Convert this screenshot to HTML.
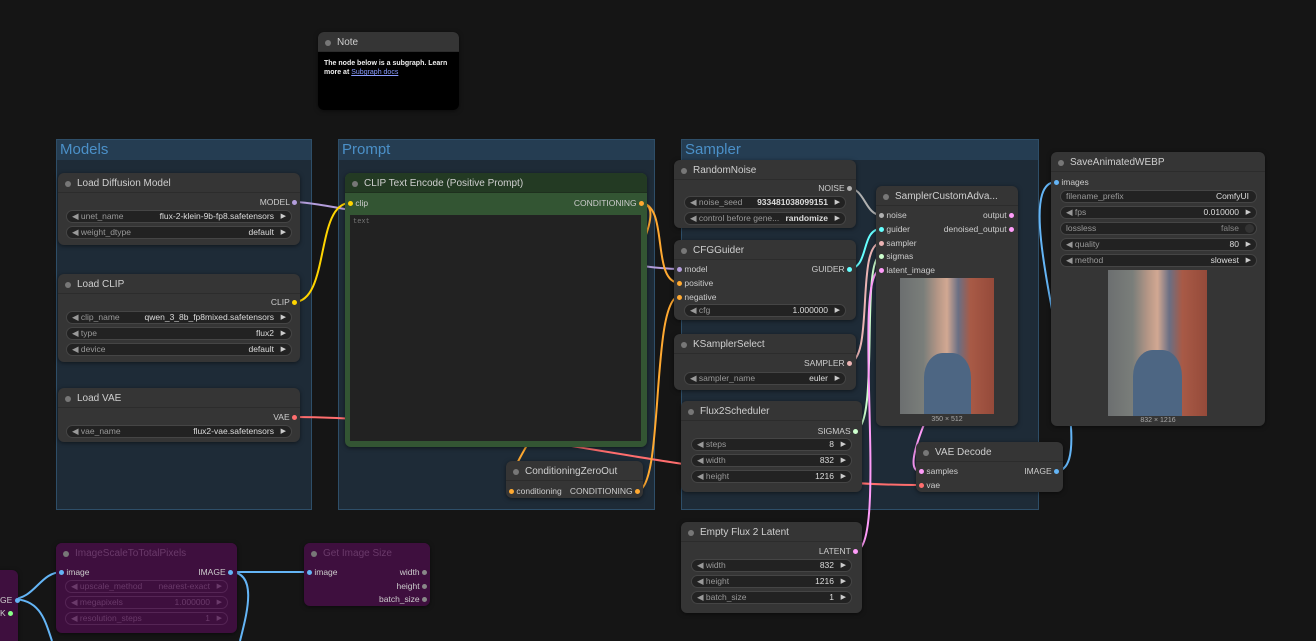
<!DOCTYPE html>
<html><head><meta charset="utf-8"><style>
*{box-sizing:border-box;margin:0;padding:0}
html,body{width:1316px;height:641px;overflow:hidden}
body{background:#151515;position:relative;font-family:"Liberation Sans",sans-serif;font-size:9px;color:#ccc}
.g{position:absolute;background:#1e2b37;border:1px solid #2e4e68}
.g .gt{height:20px;background:#253d52;color:#4b90c8;font-size:15px;line-height:20px;padding-left:3px}
.n{position:absolute;background:#353535;border-radius:6px;box-shadow:0 1px 4px rgba(0,0,0,.5)}
.t{position:absolute;left:0;right:0;top:0;height:20px;border-bottom:1px solid #2c2c2c;color:#cfcfcf;font-size:10px;line-height:22px;padding-left:19px;border-radius:6px 6px 0 0}
.t:before{content:"";position:absolute;left:7px;top:8px;width:6px;height:6px;border-radius:50%;background:#777}
.r{position:absolute;font-size:8.5px;color:#ccc;line-height:10px;white-space:nowrap}
.o{text-align:right}
.d{display:inline-block;width:5px;height:5px;border-radius:50%;vertical-align:0}
.w{position:absolute;height:13px;border:1px solid #454545;border-radius:7px;background:#222;font-size:8.5px;line-height:11px}
.w .l{position:absolute;left:5px;color:#999}
.w .v{position:absolute;right:17px;color:#ddd}
.w .a{position:absolute;right:5px;color:#ccc;font-size:7px}
.img{position:absolute;background:linear-gradient(90deg,#6c6f70 0%,#7a7e7a 25%,#b49686 40%,#d2a892 50%,#6a6f84 62%,#a85a46 75%,#954a3a 100%)}
.img:after{content:"";position:absolute;left:25%;right:25%;top:55%;bottom:0;background:#4d6683;border-radius:40% 40% 0 0}
.cap{position:absolute;font-size:7px;color:#aaa;text-align:center}
</style></head><body>

<div class="g" style="left:56px;top:139px;width:256px;height:371px"><div class="gt">Models</div></div>
<div class="g" style="left:338px;top:139px;width:317px;height:371px"><div class="gt">Prompt</div></div>
<div class="g" style="left:681px;top:139px;width:358px;height:371px"><div class="gt">Sampler</div></div>

<svg style="position:absolute;left:0;top:0" width="1316" height="641" fill="none" stroke-width="2">
<path d="M294 202 C340 202 600 269 680 269" stroke="#b39ddb"/>
<path d="M294 302 C330 302 315 203 350 203" stroke="#ffd500"/>
<path d="M294 417 C500 417 700 485 920 485" stroke="#ff6e6e"/>
<path d="M640 203 C670 203 650 283 680 283" stroke="#ffa931"/>
<path d="M640 203 C700 203 480 491 511 491" stroke="#ffa931"/>
<path d="M637 491 C665 491 650 296 680 296" stroke="#ffa931"/>
<path d="M848 188 C865 188 865 215 881 215" stroke="#b0b0b0"/>
<path d="M848 269 C870 269 860 229 881 229" stroke="#66ffff"/>
<path d="M848 363 C875 363 855 243 881 243" stroke="#ecb4b4"/>
<path d="M855 430 C880 430 860 256 881 256" stroke="#cdffcd"/>
<path d="M855 551 C890 551 850 270 881 270" stroke="#ff9cf9"/>
<path d="M1011 215 C1040 215 880 471 920 471" stroke="#ff9cf9"/>
<path d="M1056 471 C1110 471 1000 182 1056 182" stroke="#64b5f6"/>
<path d="M12 599 C35 599 40 572 62 572" stroke="#64b5f6"/>
<path d="M12 599 C40 599 45 620 52 641" stroke="#64b5f6"/>
<path d="M230 572 C260 572 280 572 310 572" stroke="#64b5f6"/>
<path d="M230 572 C260 572 245 620 240 641" stroke="#64b5f6"/>
</svg>

<div class="n" style="left:318px;top:32px;width:141px;height:78px;background:#000">
<div class="t" style="background:#353535">Note</div>
<div class="r" style="left:6px;top:27px;font-size:7px;color:#eee;white-space:normal;width:130px;line-height:9px;font-weight:bold">The node below is a subgraph. Learn more at <span style="color:#8a9cff;text-decoration:underline;font-weight:normal">Subgraph docs</span></div>
</div>

<div class="n" style="left:58px;top:173px;width:242px;height:72px"><div class="t">Load Diffusion Model</div>
<div class="r o" style="right:3px;top:24px">MODEL <span class="d" style="background:#b39ddb"></span></div>
<div class="w" style="left:8px;right:8px;top:37px"><span class="l">◀ unet_name</span><span class="v">flux-2-klein-9b-fp8.safetensors</span><span class="a">▶</span></div>
<div class="w" style="left:8px;right:8px;top:53px"><span class="l">◀ weight_dtype</span><span class="v">default</span><span class="a">▶</span></div>
</div>
<div class="n" style="left:58px;top:274px;width:242px;height:88px"><div class="t">Load CLIP</div>
<div class="r o" style="right:3px;top:23px">CLIP <span class="d" style="background:#ffd500"></span></div>
<div class="w" style="left:8px;right:8px;top:37px"><span class="l">◀ clip_name</span><span class="v">qwen_3_8b_fp8mixed.safetensors</span><span class="a">▶</span></div>
<div class="w" style="left:8px;right:8px;top:53px"><span class="l">◀ type</span><span class="v">flux2</span><span class="a">▶</span></div>
<div class="w" style="left:8px;right:8px;top:69px"><span class="l">◀ device</span><span class="v">default</span><span class="a">▶</span></div>
</div>
<div class="n" style="left:58px;top:388px;width:242px;height:54px"><div class="t">Load VAE</div>
<div class="r o" style="right:3px;top:24px">VAE <span class="d" style="background:#ff6e6e"></span></div>
<div class="w" style="left:8px;right:8px;top:37px"><span class="l">◀ vae_name</span><span class="v">flux2-vae.safetensors</span><span class="a">▶</span></div>
</div>

<div class="n" style="left:345px;top:173px;width:302px;height:274px;background:#335533"><div class="t" style="background:#233a23;border-bottom-color:#1e301e">CLIP Text Encode (Positive Prompt)</div>
<div class="r" style="left:3px;top:25px"><span class="d" style="background:#ffd500"></span> clip</div>
<div class="r o" style="right:3px;top:25px">CONDITIONING <span class="d" style="background:#ffa931"></span></div>
<div style="position:absolute;left:5px;right:6px;top:42px;bottom:6px;background:#222;font-family:'Liberation Mono',monospace;font-size:7px;color:#777;padding:3px">text</div>
</div>
<div class="n" style="left:506px;top:461px;width:137px;height:37px"><div class="t">ConditioningZeroOut</div>
<div class="r" style="left:3px;top:25px"><span class="d" style="background:#ffa931"></span> conditioning</div>
<div class="r o" style="right:3px;top:25px">CONDITIONING <span class="d" style="background:#ffa931"></span></div>
</div>

<div class="n" style="left:674px;top:160px;width:182px;height:68px"><div class="t">RandomNoise</div>
<div class="r o" style="right:4px;top:23px">NOISE <span class="d" style="background:#b0b0b0"></span></div>
<div class="w" style="left:10px;right:10px;top:36px"><span class="l">◀ noise_seed</span><span class="v" style="font-weight:bold">933481038099151</span><span class="a">▶</span></div>
<div class="w" style="left:10px;right:10px;top:52px"><span class="l">◀ control before gene...</span><span class="v" style="font-weight:bold">randomize</span><span class="a">▶</span></div>
</div>
<div class="n" style="left:674px;top:240px;width:182px;height:80px"><div class="t">CFGGuider</div>
<div class="r" style="left:3px;top:24px"><span class="d" style="background:#b39ddb"></span> model</div>
<div class="r" style="left:3px;top:38px"><span class="d" style="background:#ffa931"></span> positive</div>
<div class="r" style="left:3px;top:52px"><span class="d" style="background:#ffa931"></span> negative</div>
<div class="r o" style="right:4px;top:24px">GUIDER <span class="d" style="background:#66ffff"></span></div>
<div class="w" style="left:10px;right:10px;top:64px"><span class="l">◀ cfg</span><span class="v">1.000000</span><span class="a">▶</span></div>
</div>
<div class="n" style="left:674px;top:334px;width:182px;height:56px"><div class="t">KSamplerSelect</div>
<div class="r o" style="right:4px;top:24px">SAMPLER <span class="d" style="background:#ecb4b4"></span></div>
<div class="w" style="left:10px;right:10px;top:38px"><span class="l">◀ sampler_name</span><span class="v">euler</span><span class="a">▶</span></div>
</div>
<div class="n" style="left:681px;top:401px;width:181px;height:91px"><div class="t">Flux2Scheduler</div>
<div class="r o" style="right:4px;top:25px">SIGMAS <span class="d" style="background:#cdffcd"></span></div>
<div class="w" style="left:10px;right:10px;top:37px"><span class="l">◀ steps</span><span class="v">8</span><span class="a">▶</span></div>
<div class="w" style="left:10px;right:10px;top:53px"><span class="l">◀ width</span><span class="v">832</span><span class="a">▶</span></div>
<div class="w" style="left:10px;right:10px;top:69px"><span class="l">◀ height</span><span class="v">1216</span><span class="a">▶</span></div>
</div>
<div class="n" style="left:681px;top:522px;width:181px;height:91px"><div class="t">Empty Flux 2 Latent</div>
<div class="r o" style="right:4px;top:24px">LATENT <span class="d" style="background:#ff9cf9"></span></div>
<div class="w" style="left:10px;right:10px;top:37px"><span class="l">◀ width</span><span class="v">832</span><span class="a">▶</span></div>
<div class="w" style="left:10px;right:10px;top:53px"><span class="l">◀ height</span><span class="v">1216</span><span class="a">▶</span></div>
<div class="w" style="left:10px;right:10px;top:69px"><span class="l">◀ batch_size</span><span class="v">1</span><span class="a">▶</span></div>
</div>
<div class="n" style="left:876px;top:186px;width:142px;height:240px"><div class="t">SamplerCustomAdva...</div>
<div class="r" style="left:3px;top:24px"><span class="d" style="background:#b0b0b0"></span> noise</div>
<div class="r" style="left:3px;top:38px"><span class="d" style="background:#66ffff"></span> guider</div>
<div class="r" style="left:3px;top:52px"><span class="d" style="background:#ecb4b4"></span> sampler</div>
<div class="r" style="left:3px;top:65px"><span class="d" style="background:#cdffcd"></span> sigmas</div>
<div class="r" style="left:3px;top:79px"><span class="d" style="background:#ff9cf9"></span> latent_image</div>
<div class="r o" style="right:4px;top:24px">output <span class="d" style="background:#ff9cf9"></span></div>
<div class="r o" style="right:4px;top:38px">denoised_output <span class="d" style="background:#ff9cf9"></span></div>
<div class="img" style="left:24px;top:92px;width:94px;height:136px"></div>
<div class="cap" style="left:0;right:0;top:230px">350 × 512</div>
</div>
<div class="n" style="left:916px;top:442px;width:147px;height:50px"><div class="t">VAE Decode</div>
<div class="r" style="left:3px;top:24px"><span class="d" style="background:#ff9cf9"></span> samples</div>
<div class="r" style="left:3px;top:38px"><span class="d" style="background:#ff6e6e"></span> vae</div>
<div class="r o" style="right:4px;top:24px">IMAGE <span class="d" style="background:#64b5f6"></span></div>
</div>
<div class="n" style="left:1051px;top:152px;width:214px;height:274px"><div class="t">SaveAnimatedWEBP</div>
<div class="r" style="left:3px;top:25px"><span class="d" style="background:#64b5f6"></span> images</div>
<div class="w" style="left:9px;right:8px;top:38px"><span class="l">filename_prefix</span><span class="v" style="right:7px">ComfyUI</span></div>
<div class="w" style="left:9px;right:8px;top:54px"><span class="l">◀ fps</span><span class="v">0.010000</span><span class="a">▶</span></div>
<div class="w" style="left:9px;right:8px;top:70px"><span class="l">lossless</span><span class="v" style="color:#888">false</span><span class="a" style="width:9px;height:9px;border-radius:50%;background:#333;top:1px;right:2px"></span></div>
<div class="w" style="left:9px;right:8px;top:86px"><span class="l">◀ quality</span><span class="v">80</span><span class="a">▶</span></div>
<div class="w" style="left:9px;right:8px;top:102px"><span class="l">◀ method</span><span class="v">slowest</span><span class="a">▶</span></div>
<div class="img" style="left:57px;top:118px;width:99px;height:146px"></div>
<div class="cap" style="left:0;right:0;top:265px">832 × 1216</div>
</div>

<div class="n" style="left:-20px;top:570px;width:38px;height:80px;background:#3e0f3e"></div>
<div class="r" style="left:0;top:595px;color:#ccc">GE <span class="d" style="background:#64b5f6"></span></div>
<div class="r" style="left:0;top:608px;color:#ccc">K <span class="d" style="background:#8f8"></span></div>
<div class="n" style="left:56px;top:543px;width:181px;height:90px;background:#3e0f3e"><div class="t" style="background:#3e0f3e;color:#6a3a6a;border-bottom:none">ImageScaleToTotalPixels</div>
<div class="r" style="left:3px;top:24px"><span class="d" style="background:#64b5f6"></span> image</div>
<div class="r o" style="right:4px;top:24px">IMAGE <span class="d" style="background:#64b5f6"></span></div>
<div class="w" style="left:9px;right:9px;top:37px;background:#3e0f3e;border-color:#552555"><span class="l" style="color:#6a3a6a">◀ upscale_method</span><span class="v" style="color:#6a3a6a">nearest-exact</span><span class="a" style="color:#6a3a6a">▶</span></div>
<div class="w" style="left:9px;right:9px;top:53px;background:#3e0f3e;border-color:#552555"><span class="l" style="color:#6a3a6a">◀ megapixels</span><span class="v" style="color:#6a3a6a">1.000000</span><span class="a" style="color:#6a3a6a">▶</span></div>
<div class="w" style="left:9px;right:9px;top:69px;background:#3e0f3e;border-color:#552555"><span class="l" style="color:#6a3a6a">◀ resolution_steps</span><span class="v" style="color:#6a3a6a">1</span><span class="a" style="color:#6a3a6a">▶</span></div>
</div>
<div class="n" style="left:304px;top:543px;width:126px;height:63px;background:#3e0f3e"><div class="t" style="background:#3e0f3e;color:#6a3a6a;border-bottom:none">Get Image Size</div>
<div class="r" style="left:3px;top:24px"><span class="d" style="background:#64b5f6"></span> image</div>
<div class="r o" style="right:3px;top:24px">width <span class="d" style="background:#888"></span></div>
<div class="r o" style="right:3px;top:38px">height <span class="d" style="background:#888"></span></div>
<div class="r o" style="right:3px;top:51px">batch_size <span class="d" style="background:#888"></span></div>
</div>
</body></html>
